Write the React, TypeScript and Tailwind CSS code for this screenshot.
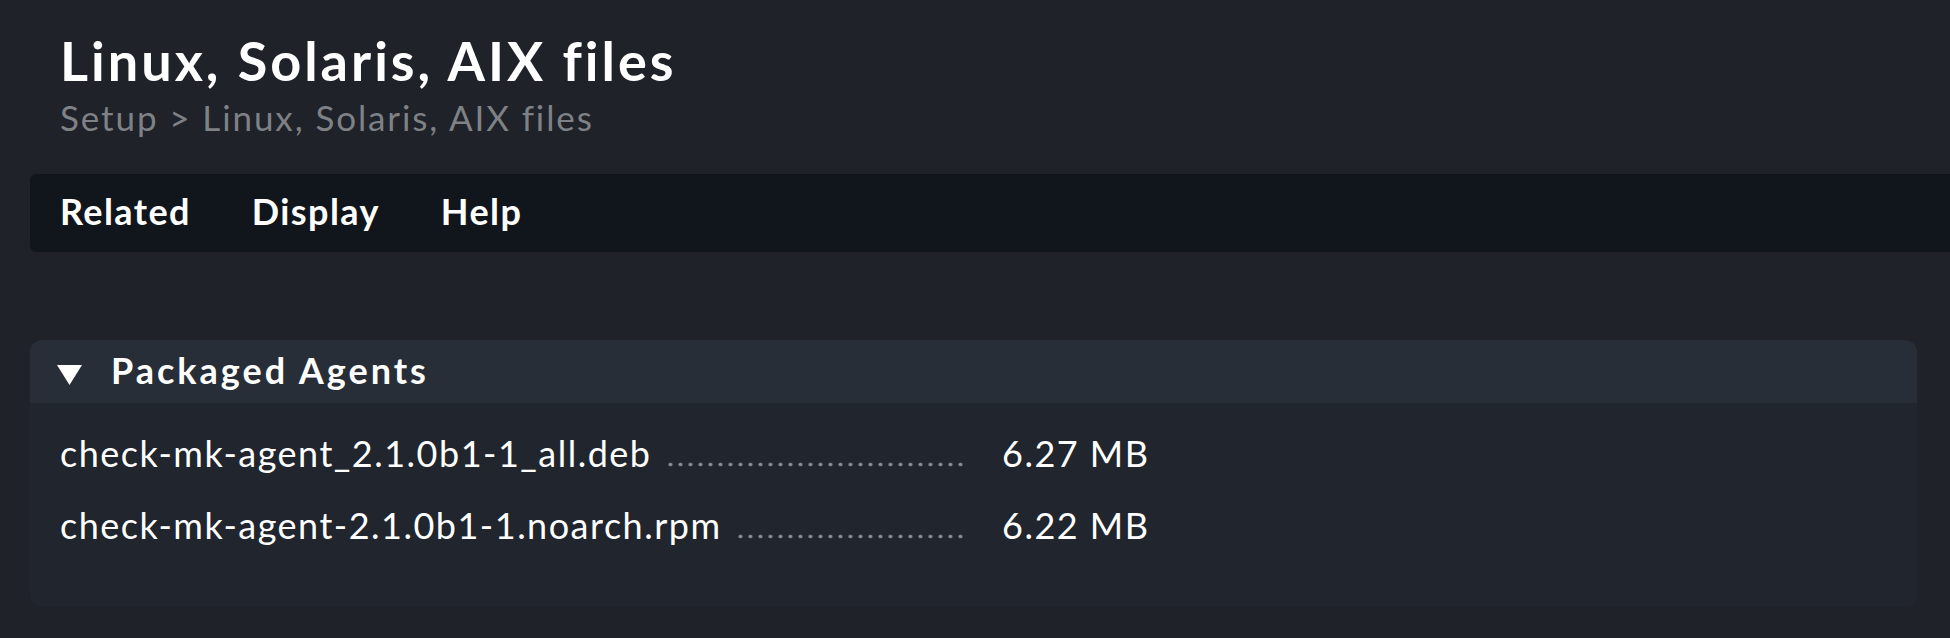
const menuItems = ["Related", "Display", "Help"];

const agents = [
  { name: "check-mk-agent_2.1.0b1-1_all.deb", size: "6.27 MB" },
  { name: "check-mk-agent-2.1.0b1-1.noarch.rpm", size: "6.22 MB" },
];

export default function App() {
  return (
    <div className="min-h-screen bg-[#1f2229] pl-[30px] font-[Lato,sans-serif] text-white">
      {/* page title + breadcrumb */}
      <div className="pl-[30px] pt-[29px]">
        <h1 className="text-[54px] font-bold leading-[64px] tracking-[3px]">Linux, Solaris, AIX files</h1>
        <div className="mt-[4px] text-[35px] leading-[40px] tracking-[1.9px] text-[#7e8185]">
          Setup &gt; Linux, Solaris, AIX files
        </div>
      </div>

      {/* page menu */}
      <nav className="mt-[37px] flex h-[78px] items-start gap-[61px] rounded-l-[6px] bg-[#11161d] pl-[30px] pt-[19px] text-[36px] font-bold leading-[36px] tracking-[1.4px]">
        {menuItems.map((item) => (
          <span key={item}>{item}</span>
        ))}
      </nav>

      {/* foldable section */}
      <div className="mr-[33px] mt-[88px] overflow-hidden rounded-[12px]">
        <div className="flex h-[63px] items-start bg-[#272e38] pl-[27px]">
          <svg width="25" height="20" viewBox="0 0 25 20" className="mt-[25px] shrink-0">
            <polygon points="0,0 25,0 12.5,20" fill="#ffffff" />
          </svg>
          <span className="ml-[29px] pt-[12px] text-[36px] font-bold leading-[36px] tracking-[3px]">
            Packaged Agents
          </span>
        </div>
        <div className="bg-[#21262e] pb-[46px] pl-[30px] pt-[14px]">
          {agents.map((a) => (
            <div
              key={a.name}
              className="grid h-[72px] grid-cols-[908px_auto] gap-[34px] text-[36px] leading-[72px] tracking-[1.5px]"
            >
              <div className="flex min-w-0 overflow-hidden">
                <span className="whitespace-nowrap">{a.name}</span>
                <span className="ml-[16px] flex-1 bg-fixed bg-[radial-gradient(circle_at_5px_32.5px,#8a9096_1.5px,transparent_2.2px)] bg-[length:10px_72px] bg-[position:5px_0]" />
              </div>
              <span className="whitespace-nowrap">{a.size}</span>
            </div>
          ))}
        </div>
      </div>
    </div>
  );
}
